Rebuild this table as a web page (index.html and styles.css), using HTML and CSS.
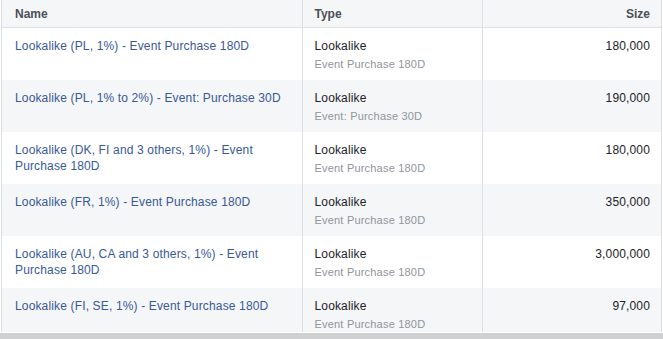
FILE: index.html
```html
<!DOCTYPE html>
<html>
<head>
<meta charset="utf-8">
<link rel="stylesheet" href="styles.css">
</head>
<body>
<div class="panel">
  <table class="grid">
    <colgroup>
      <col class="c-name">
      <col class="c-type">
      <col class="c-size">
    </colgroup>
    <thead>
      <tr>
        <th class="h-name">Name</th>
        <th class="h-type">Type</th>
        <th class="h-size">Size</th>
      </tr>
    </thead>
    <tbody>
      <tr>
        <td class="name"><a>Lookalike (PL, 1%) - Event Purchase 180D</a></td>
        <td class="type"><div class="main">Lookalike</div><div class="sub">Event Purchase 180D</div></td>
        <td class="size">180,000</td>
      </tr>
      <tr class="alt">
        <td class="name"><a>Lookalike (PL, 1% to 2%) - Event: Purchase 30D</a></td>
        <td class="type"><div class="main">Lookalike</div><div class="sub">Event: Purchase 30D</div></td>
        <td class="size">190,000</td>
      </tr>
      <tr>
        <td class="name"><a>Lookalike (DK, FI and 3 others, 1%) - Event Purchase 180D</a></td>
        <td class="type"><div class="main">Lookalike</div><div class="sub">Event Purchase 180D</div></td>
        <td class="size">180,000</td>
      </tr>
      <tr class="alt">
        <td class="name"><a>Lookalike (FR, 1%) - Event Purchase 180D</a></td>
        <td class="type"><div class="main">Lookalike</div><div class="sub">Event Purchase 180D</div></td>
        <td class="size">350,000</td>
      </tr>
      <tr>
        <td class="name"><a>Lookalike (AU, CA and 3 others, 1%) - Event Purchase 180D</a></td>
        <td class="type"><div class="main">Lookalike</div><div class="sub">Event Purchase 180D</div></td>
        <td class="size">3,000,000</td>
      </tr>
      <tr class="alt">
        <td class="name"><a>Lookalike (FI, SE, 1%) - Event Purchase 180D</a></td>
        <td class="type"><div class="main">Lookalike</div><div class="sub">Event Purchase 180D</div></td>
        <td class="size">97,000</td>
      </tr>
    </tbody>
  </table>
</div>
<div class="bottom-bar"></div>
</body>
</html>
```
FILE: styles.css
```css
html, body {
  margin: 0;
  padding: 0;
  background: #ffffff;
}
body {
  font-family: "Liberation Sans", Arial, sans-serif;
  font-size: 12px;
  color: #1d2129;
}
.panel {
  margin-left: 1px;
  width: 659px;
  height: 332px;
  overflow: hidden;
  border-left: 1px solid #dddfe2;
  border-right: 1px solid #dddfe2;
}
.grid {
  width: 659px;
  border-collapse: collapse;
  table-layout: fixed;
}
.c-name { width: 300px; }
.c-type { width: 180px; }
.c-size { width: 179px; }
th {
  height: 27px;
  padding: 0 12px;
  background: #f5f6f7;
  border-bottom: 1px solid #dddfe2;
  color: #4b4f56;
  font-weight: bold;
  font-size: 12px;
  text-align: left;
  vertical-align: middle;
}
th.h-name { padding-left: 13px; }
th.h-size { text-align: right; padding-right: 11px; }
th + th, td + td {
  border-left: 1px solid #dddfe2;
}
td {
  height: 52px;
  box-sizing: border-box;
  padding: 10px 12px 8px;
  vertical-align: top;
  line-height: 16px;
  letter-spacing: 0.15px;
}
td.name { padding-left: 13px; padding-right: 20px; }
tr.alt td { background: #f5f6f7; }
.name a {
  color: #385898;
  text-decoration: none;
}
.main {
  color: #1d2129;
}
.sub {
  margin-top: 3px;
  color: #90949c;
  font-size: 11px;
  line-height: 15px;
  letter-spacing: 0.2px;
}
td.size {
  text-align: right;
  padding-right: 11px;
}
.bottom-bar {
  margin-top: 1px;
  height: 6px;
  background: #cfd0d2;
}
```
